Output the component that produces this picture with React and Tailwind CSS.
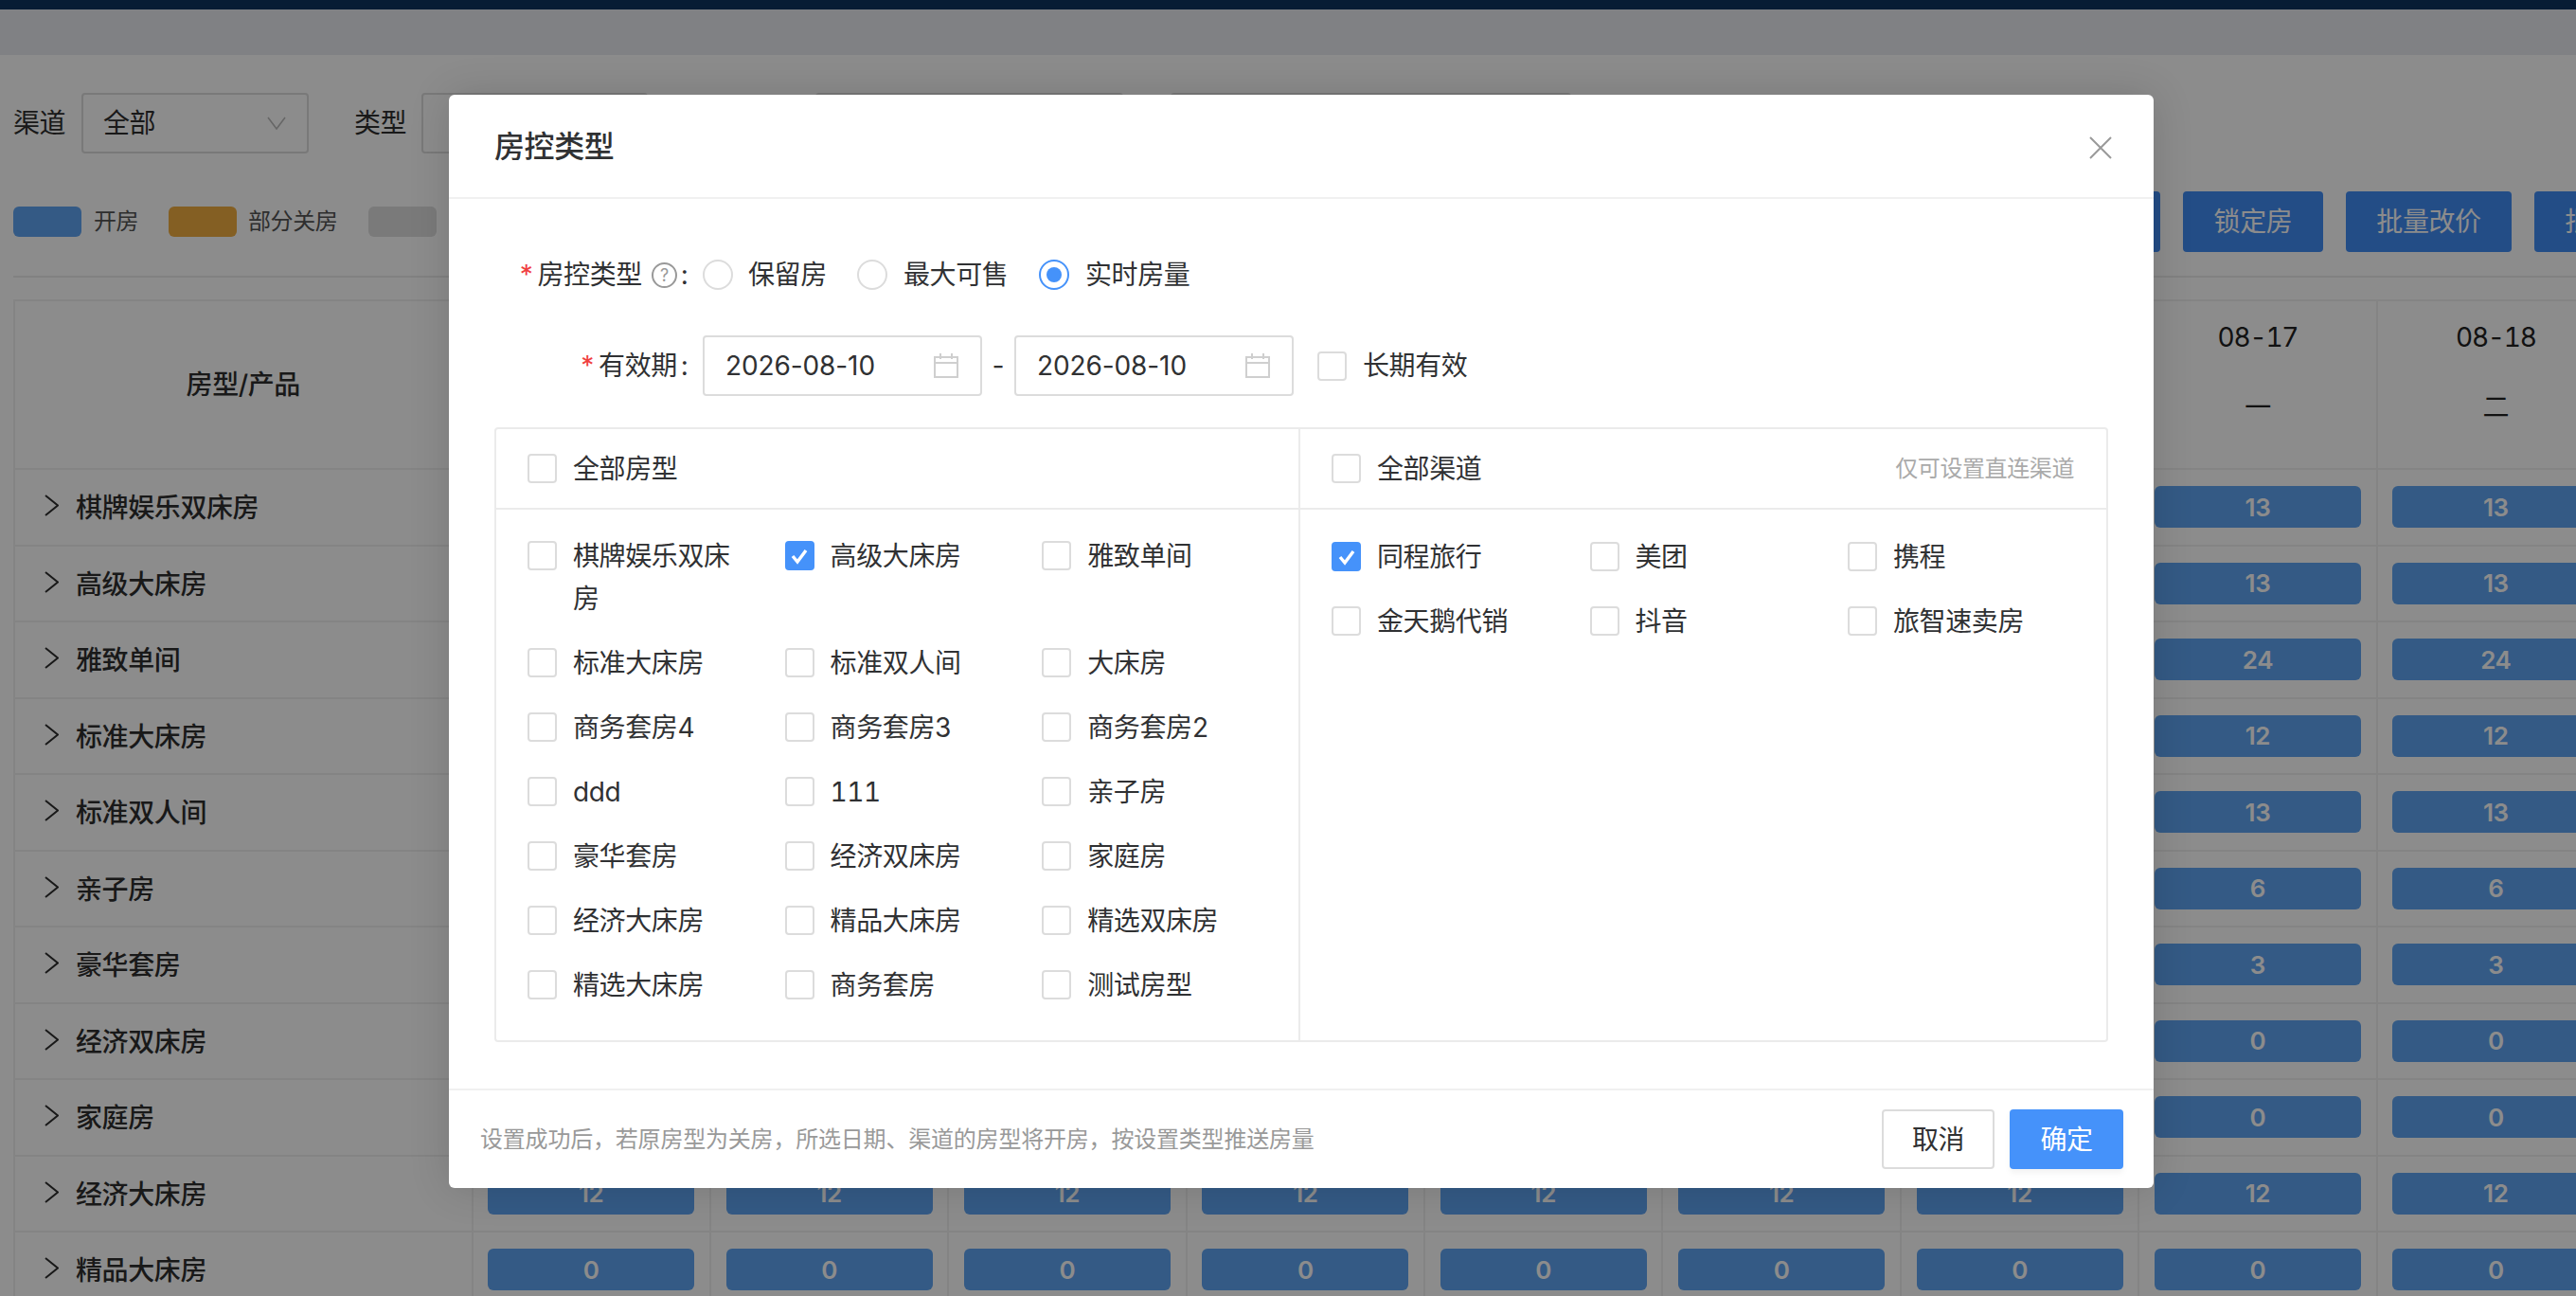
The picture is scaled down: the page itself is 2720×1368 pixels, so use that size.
const FONT = 'font-["Inter","Noto_Sans_CJK_SC",sans-serif]';

const roomRows = [
  ['棋牌娱乐双床房', 13],
  ['高级大床房', 13],
  ['雅致单间', 24],
  ['标准大床房', 12],
  ['标准双人间', 13],
  ['亲子房', 6],
  ['豪华套房', 3],
  ['经济双床房', 0],
  ['家庭房', 0],
  ['经济大床房', 12],
  ['精品大床房', 0],
];

const dates = [
  ['08-10', '一'],
  ['08-11', '二'],
  ['08-12', '三'],
  ['08-13', '四'],
  ['08-14', '五'],
  ['08-15', '六'],
  ['08-16', '日'],
  ['08-17', '一'],
  ['08-18', '二'],
];

const roomOptions = [
  ['棋牌娱乐双床房', false],
  ['高级大床房', true],
  ['雅致单间', false],
  ['标准大床房', false],
  ['标准双人间', false],
  ['大床房', false],
  ['商务套房4', false],
  ['商务套房3', false],
  ['商务套房2', false],
  ['ddd', false],
  ['111', false],
  ['亲子房', false],
  ['豪华套房', false],
  ['经济双床房', false],
  ['家庭房', false],
  ['经济大床房', false],
  ['精品大床房', false],
  ['精选双床房', false],
  ['精选大床房', false],
  ['商务套房', false],
  ['测试房型', false],
];

const channelOptions = [
  ['同程旅行', true],
  ['美团', false],
  ['携程', false],
  ['金天鹅代销', false],
  ['抖音', false],
  ['旅智速卖房', false],
];

const Chevron = ({ className }) => (
  <svg viewBox="0 0 20 14" fill="none" stroke="currentColor" strokeWidth="1.6" className={className}>
    <path d="M1 1l9 12 9-12" />
  </svg>
);

const RowArrow = () => (
  <svg viewBox="0 0 15 23" fill="none" stroke="currentColor" strokeWidth="2" className="w-[15px] h-[23px] text-[#2e2e2e] shrink-0 -mt-[3px]">
    <path d="M1 1l13 10.500L1 22" />
  </svg>
);

const CalendarIcon = () => (
  <svg viewBox="0 0 26 26" fill="none" stroke="#cfcfcf" strokeWidth="2" className="w-[26px] h-[26px] shrink-0">
    <path d="M1 4h24v21H1zM1 10h24M7 0v6M19 0v6" />
  </svg>
);

const Checkbox = ({ checked }) =>
  checked ? (
    <div className="w-[31px] h-[31px] rounded-[4px] bg-[#4592fa] flex items-center justify-center shrink-0">
      <svg viewBox="0 0 20 20" fill="none" stroke="#fff" strokeWidth="3.400" className="w-[20px] h-[20px]">
        <path d="M3 10l5 6 9-12" />
      </svg>
    </div>
  ) : (
    <div className="w-[31px] h-[31px] rounded-[4px] border-2 border-[#dcdcdc] bg-white shrink-0" />
  );

const Radio = ({ checked }) => (
  <span className={`w-[32px] h-[32px] rounded-full border-2 flex items-center justify-center shrink-0 ${checked ? 'border-[#4592fa]' : 'border-[#dcdcdc]'}`}>
    {checked && <span className="w-[16px] h-[16px] rounded-full bg-[#4592fa]" />}
  </span>
);

const OptionItem = ({ label, checked }) => (
  <div className="flex items-start gap-[17px]">
    <div className="mt-[7px]">
      <Checkbox checked={checked} />
    </div>
    <span className="w-[176px] text-[28px] leading-[45px] text-[#303133] break-all pt-[1px]">{label}</span>
  </div>
);

const DateInput = () => (
  <div className="w-[295px] h-[64px] rounded-[4px] border-2 border-[#dcdcdc] flex items-center justify-between pl-[22px] pr-[23px]">
    <span className="text-[28px] text-[#303133] normal-nums tracking-[-0.1px]">2026-08-10</span>
    <CalendarIcon />
  </div>
);

const Required = () => <span className="text-[#f04040] text-[28px] mr-[3px] leading-none">*</span>;

const TableRow = ({ name, count }) => (
  <div className="flex h-[80.5px] border-b-2 border-[#f0f0f0]">
    <div className="w-[483.5px] shrink-0 flex items-center gap-[18px] pl-[31px] border-r-2 border-[#f0f0f0]">
      <RowArrow />
      <span className="text-[28px] font-medium text-[#2e2e2e] pt-[2px]">{name}</span>
    </div>
    {dates.map(([d]) => (
      <div key={d} className="w-[251.4px] shrink-0 flex items-center justify-center border-r-2 border-[#f0f0f0]">
        <div className="w-[218px] h-[44px] rounded-[6px] bg-[#60a4f2] flex items-center justify-center text-white text-[26px] font-semibold normal-nums">
          {count}
        </div>
      </div>
    ))}
  </div>
);

export default function App() {
  return (
    <div className={`relative w-full h-[1368px] overflow-hidden bg-white tracking-[-0.4px] tabular-nums ${FONT}`}>
      <div className="h-[10px] bg-[#0d3360]" />
      <div className="h-[48px] bg-[#eaebf0]" />

      <div className="pl-[14px] pt-[40px] w-[2851px]">
        <div className="flex items-center h-[64px] text-[#2e2e2e]">
          <span className="text-[28px] w-[72px]">渠道</span>
          <div className="w-[240px] h-[64px] rounded-[4px] border-2 border-[#dcdcdc] flex items-center justify-between pl-[21px] pr-[22px]">
            <span className="text-[28px]">全部</span>
            <Chevron className="w-[20px] h-[14px] text-[#bbb]" />
          </div>
          <span className="text-[28px] ml-[48px] w-[71px]">类型</span>
          <div className="w-[239px] h-[64px] rounded-[4px] border-2 border-[#dcdcdc]" />
          <div className="ml-[177px] w-[325px] h-[64px] rounded-[4px] border-2 border-[#dcdcdc]" />
          <div className="ml-[50px] w-[423px] h-[64px] rounded-[4px] border-2 border-[#dcdcdc]" />
        </div>

        <div className="mt-[40px] flex items-center h-[64px]">
          <div className="w-[2119px] shrink-0 flex items-center text-[24px] text-[#555]">
            <span className="w-[72px] h-[32px] rounded-[6px] bg-[#60a4f2]" />
            <span className="ml-[13px] w-[79px]">开房</span>
            <span className="w-[72px] h-[32px] rounded-[6px] bg-[#f0ad40]" />
            <span className="ml-[12px] w-[127px]">部分关房</span>
            <span className="w-[72px] h-[32px] rounded-[6px] bg-[#dedede]" />
          </div>
          <div className="flex gap-[24px] text-[28px] text-white whitespace-nowrap shrink-0">
            <div className="w-[148px] h-[64px] rounded-[4px] bg-[#418cf5] flex items-center justify-center">解锁房</div>
            <div className="w-[148px] h-[64px] rounded-[4px] bg-[#418cf5] flex items-center justify-center">锁定房</div>
            <div className="w-[175px] h-[64px] rounded-[4px] bg-[#418cf5] flex items-center justify-center">批量改价</div>
            <div className="w-[175px] h-[64px] rounded-[4px] bg-[#418cf5] flex items-center justify-center">批量改态</div>
          </div>
        </div>

        <div className="mt-[25px] border-t-2 border-[#ebebeb]" />

        <div className="mt-[23px] border-l-2 border-t-2 border-[#f0f0f0]">
          <div className="flex h-[178px] border-b-2 border-[#f0f0f0]">
            <div className="w-[483.5px] shrink-0 flex items-center justify-center border-r-2 border-[#f0f0f0] text-[28px] font-medium text-[#2e2e2e]">
              房型/产品
            </div>
            {dates.map(([d, w]) => (
              <div key={d} className="w-[251.4px] shrink-0 flex flex-col items-center pt-[18px] border-r-2 border-[#f0f0f0] text-[#222] text-[28px]">
                <span className="leading-[40px] tracking-[-1.2px]">{d}</span>
                <span className="mt-[34px] leading-[40px]">{w}</span>
              </div>
            ))}
          </div>
          {roomRows.map(([name, count]) => (
            <TableRow key={name} name={name} count={count} />
          ))}
        </div>
      </div>

      <div className="absolute inset-0 bg-black/45" />

      <div className="absolute left-[474px] top-[100px] w-[1800px] h-[1154px] bg-white rounded-[6px] shadow-[0_0_44px_rgba(0,0,0,0.14)] flex flex-col">
        <div className="h-[110px] shrink-0 border-b-2 border-[#f0f0f0] flex items-center justify-between pl-[48px] pr-[44px]">
          <h2 className="text-[32px] font-medium text-[#303133] pt-[2px]">房控类型</h2>
          <svg viewBox="0 0 24 24" fill="none" stroke="#999" strokeWidth="2" className="w-[24px] h-[24px] mt-[3px]">
            <path d="M1 1l22 22M23 1L1 23" />
          </svg>
        </div>

        <div className="flex-1 px-[48px] pt-[48px]">
          <div className="flex items-center h-[64px]">
            <div className="w-[204px] flex items-center justify-end text-[28px] text-[#303133]">
              <Required />
              <span>房控类型</span>
              <span className="ml-[10px] w-[27px] h-[27px] rounded-full border-2 border-[#999] text-[#999] text-[18px] flex items-center justify-center">?</span>
              <span className="ml-[4px]">:</span>
            </div>
            <div className="ml-[16px] flex items-center text-[28px] text-[#303133]">
              <Radio />
              <span className="ml-[16px] w-[115px]">保留房</span>
              <Radio />
              <span className="ml-[17px] w-[143px]">最大可售</span>
              <Radio checked />
              <span className="ml-[17px]">实时房量</span>
            </div>
          </div>

          <div className="mt-[32px] flex items-center h-[64px]">
            <div className="w-[204px] flex items-center justify-end text-[28px] text-[#303133]">
              <Required />
              <span>有效期</span>
              <span className="ml-[4px]">:</span>
            </div>
            <div className="ml-[16px] flex items-center text-[#303133] text-[28px]">
              <DateInput />
              <span className="w-[34px] text-center">-</span>
              <DateInput />
              <div className="ml-[25px]">
                <Checkbox />
              </div>
              <span className="ml-[17px]">长期有效</span>
            </div>
          </div>

          <div className="mt-[33px] h-[649px] rounded-[4px] border-2 border-[#ebebeb] flex">
            <div className="w-[849px] shrink-0 border-r-2 border-[#ebebeb]">
              <div className="h-[85px] border-b-2 border-[#ebebeb] flex items-center gap-[17px] pl-[33px]">
                <Checkbox />
                <span className="text-[28px] text-[#303133] pt-[1px]">全部房型</span>
              </div>
              <div className="grid grid-cols-[271.600px_271.600px_271.600px] gap-y-[22px] pl-[33px] pt-[26px]">
                {roomOptions.map(([label, checked]) => (
                  <OptionItem key={label} label={label} checked={checked} />
                ))}
              </div>
            </div>
            <div className="flex-1">
              <div className="h-[85px] border-b-2 border-[#ebebeb] flex items-center justify-between pl-[33px] pr-[34px]">
                <div className="flex items-center gap-[17px]">
                  <Checkbox />
                  <span className="text-[28px] text-[#303133] pt-[1px]">全部渠道</span>
                </div>
                <span className="text-[24px] text-[#aaa]">仅可设置直连渠道</span>
              </div>
              <div className="grid grid-cols-[272.500px_272.500px_272.500px] gap-y-[22px] pl-[33px] pt-[27px]">
                {channelOptions.map(([label, checked]) => (
                  <OptionItem key={label} label={label} checked={checked} />
                ))}
              </div>
            </div>
          </div>
        </div>

        <div className="h-[105px] shrink-0 border-t-2 border-[#f0f0f0] flex items-center justify-between pl-[33px] pr-[32px]">
          <span className="text-[24px] text-[#999] tracking-[-0.2px]">设置成功后，若原房型为关房，所选日期、渠道的房型将开房，按设置类型推送房量</span>
          <div className="flex gap-[16px] text-[28px]">
            <button className="w-[119px] h-[63px] rounded-[4px] border-2 border-[#dcdcdc] text-[#303133] bg-white">取消</button>
            <button className="w-[120px] h-[63px] rounded-[4px] bg-[#4592fa] text-white shadow-[0_4px_6px_rgba(0,0,0,0.05)]">确定</button>
          </div>
        </div>
      </div>
    </div>
  );
}
